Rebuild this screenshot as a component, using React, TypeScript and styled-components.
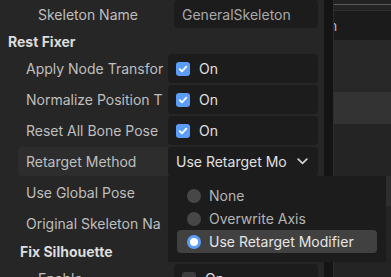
import React from "react";
import styled, { createGlobalStyle } from "styled-components";

const GlobalStyle = createGlobalStyle`
  html, body {
    margin: 0;
    padding: 0;
    background: #262626;
  }
  body {
    font-family: Inter, "Noto Sans", sans-serif;
    font-size: 14px;
    -webkit-font-smoothing: antialiased;
  }
`;

const Screen = styled.div`
  position: relative;
  display: flex;
  width: 391px;
  height: 277px;
  overflow: hidden;
`;

const Inspector = styled.div`
  width: 324px;
  flex: none;
  display: flex;
  flex-direction: column;
  gap: 2px;
  background: #262626;
  overflow: hidden;
`;

const Splitter = styled.div`
  width: 9px;
  flex: none;
  background: #141414;
  border-right: 1px solid #2c2c2c;
`;

const SidePanel = styled.div`
  flex: 1;
  display: flex;
  flex-direction: column;
  overflow: hidden;
`;

const Band = styled.div<{ $h: number; $bg: string }>`
  height: ${(p) => p.$h}px;
  flex: none;
  background: ${(p) => p.$bg};
  overflow: hidden;
  display: flex;
  align-items: center;
  color: #bdbdbd;
`;

const ClippedTab = styled.span`
  margin-left: -5px;
`;

const Row = styled.div<{ $h?: number }>`
  display: flex;
  height: ${(p) => p.$h ?? 29}px;
  flex: none;
  padding-right: 6px;
`;

const Label = styled.div<{ $inset: number; $width: number; $active?: boolean }>`
  width: ${(p) => p.$width - p.$inset}px;
  margin-left: ${(p) => p.$inset}px;
  flex: none;
  box-sizing: border-box;
  padding-left: 8px;
  display: flex;
  align-items: center;
  white-space: nowrap;
  overflow: hidden;
  color: #bfbfbf;
  background: ${(p) => (p.$active ? "#2d2d2d" : "transparent")};
  border-radius: 4px 0 0 4px;
`;

const Value = styled.div<{ $muted?: boolean }>`
  flex: 1;
  display: flex;
  align-items: center;
  gap: 9px;
  padding: 0 8px;
  background: #1c1c1c;
  border-radius: 4px;
  color: ${(p) => (p.$muted ? "#a9a9a9" : "#e0e0e0")};
  white-space: nowrap;
  overflow: hidden;
`;

const Dropdown = styled(Value)`
  justify-content: space-between;
  padding-right: 10px;
`;

const Section = styled.div<{ $inset: number }>`
  height: 22px;
  flex: none;
  display: flex;
  align-items: center;
  padding-left: ${(p) => p.$inset}px;
  font-weight: 700;
  color: #dcdcdc;
`;

const Box = styled.span<{ $on?: boolean }>`
  width: 14px;
  height: 14px;
  flex: none;
  border-radius: 3px;
  background: ${(p) => (p.$on ? "#5b9df8" : "#3c3c3c")};
  display: flex;
  align-items: center;
  justify-content: center;
`;

const Popup = styled.div`
  position: absolute;
  left: 168px;
  top: 176px;
  width: 218px;
  height: 86px;
  box-sizing: border-box;
  padding: 8px 9px;
  background: #1c1c1c;
  display: flex;
  flex-direction: column;
  gap: 0;
`;

const Item = styled.div<{ $selected?: boolean }>`
  height: 23px;
  display: flex;
  align-items: center;
  gap: 8px;
  padding-left: 10px;
  border-radius: 4px;
  background: ${(p) => (p.$selected ? "#414141" : "transparent")};
  color: ${(p) => (p.$selected ? "#e6e6e6" : "#b4b4b4")};
  white-space: nowrap;
`;

const Radio = styled.span<{ $on?: boolean }>`
  width: 14px;
  height: 14px;
  flex: none;
  border-radius: 50%;
  box-sizing: border-box;
  background: ${(p) => (p.$on ? "#ffffff" : "#474747")};
  border: ${(p) => (p.$on ? "3px solid #5b9df8" : "none")};
`;

const Check = ({ on }: { on?: boolean }) => (
  <Box $on={on}>
    {on && (
      <svg width="10" height="10" viewBox="0 0 10 10">
        <path d="M1.8 5.2 L4 7.3 L8.3 2.7" fill="none" stroke="#fff" strokeWidth="1.8" strokeLinecap="round" strokeLinejoin="round" />
      </svg>
    )}
  </Box>
);

const Chevron = () => (
  <svg width="11" height="7" viewBox="0 0 11 7">
    <path d="M1.2 1.2 L5.5 5.3 L9.8 1.2" fill="none" stroke="#cfcfcf" strokeWidth="1.8" strokeLinecap="round" strokeLinejoin="round" />
  </svg>
);

const restRows = [
  { label: "Apply Node Transfor", on: true },
  { label: "Normalize Position T", on: true },
  { label: "Reset All Bone Pose", on: true },
];

export default function App() {
  return (
    <>
      <GlobalStyle />
      <Screen>
        <Inspector>
          <Row $h={28}>
            <Label $inset={30} $width={174}>Skeleton Name</Label>
            <Value $muted>GeneralSkeleton</Value>
          </Row>
          <Section $inset={8}>Rest Fixer</Section>
          {restRows.map((r) => (
            <Row key={r.label}>
              <Label $inset={18} $width={168}>{r.label}</Label>
              <Value>
                <Check on={r.on} />
                On
              </Value>
            </Row>
          ))}
          <Row>
            <Label $inset={18} $width={168} $active>Retarget Method</Label>
            <Dropdown>
              Use Retarget Mo
              <Chevron />
            </Dropdown>
          </Row>
          <Row>
            <Label $inset={18} $width={168}>Use Global Pose</Label>
            <Value />
          </Row>
          <Row>
            <Label $inset={18} $width={168}>Original Skeleton Na</Label>
            <Value />
          </Row>
          <Section $inset={20}>Fix Silhouette</Section>
          <Row>
            <Label $inset={30} $width={174}>Enable</Label>
            <Value>
              <Check />
              On
            </Value>
          </Row>
        </Inspector>
        <Splitter />
        <SidePanel>
          <Band $h={4} $bg="#232323" />
          <Band $h={1} $bg="#5a5a5a" />
          <Band $h={5} $bg="#232323" />
          <Band $h={1} $bg="#2e2e2e" />
          <Band $h={29} $bg="#1b1b1b">
            <ClippedTab>n</ClippedTab>
          </Band>
          <Band $h={52} $bg="#282828" />
          <Band $h={32} $bg="#333333" />
          <Band $h={52} $bg="#242424" />
          <Band $h={30} $bg="#2e2e2e" />
          <Band $h={71} $bg="#242424" />
        </SidePanel>
        <Popup>
          <Item>
            <Radio />
            None
          </Item>
          <Item>
            <Radio />
            Overwrite Axis
          </Item>
          <Item $selected>
            <Radio $on />
            Use Retarget Modifier
          </Item>
        </Popup>
      </Screen>
    </>
  );
}
